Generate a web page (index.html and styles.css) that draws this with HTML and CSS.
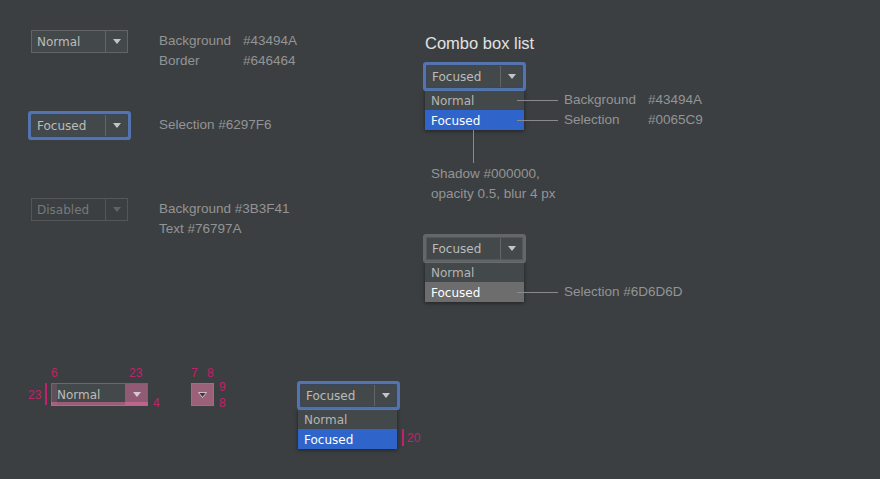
FILE: index.html
```html
<!DOCTYPE html>
<html>
<head>
<meta charset="utf-8">
<link rel="stylesheet" href="styles.css">
</head>
<body>
<div class="page">
  <div class="left">
    <div class="spec-row">
      <div class="combo"><span class="combo-value">Normal</span><span class="combo-btn"><svg class="arrow" width="8" height="5" viewBox="0 0 8 5"><path d="M0 0H8L4 5Z" fill="currentColor"/></svg></span></div>
      <div class="spec-text spec-grid"><span>Background</span><span>#43494A</span><span>Border</span><span>#646464</span></div>
    </div>
    <div class="spec-row">
      <div class="combo focus"><span class="combo-value">Focused</span><span class="combo-btn"><svg class="arrow" width="8" height="5" viewBox="0 0 8 5"><path d="M0 0H8L4 5Z" fill="currentColor"/></svg></span></div>
      <div class="spec-text">Selection #6297F6</div>
    </div>
    <div class="spec-row">
      <div class="combo disabled"><span class="combo-value">Disabled</span><span class="combo-btn"><svg class="arrow" width="8" height="5" viewBox="0 0 8 5"><path d="M0 0H8L4 5Z" fill="currentColor"/></svg></span></div>
      <div class="spec-text">Background #3B3F41<br>Text #76797A</div>
    </div>
  </div>

  <div class="right">
    <div class="title">Combo box list</div>
    <div class="combo focus first"><span class="combo-value">Focused</span><span class="combo-btn"><svg class="arrow" width="8" height="5" viewBox="0 0 8 5"><path d="M0 0H8L4 5Z" fill="currentColor"/></svg></span></div>
    <div class="list">
      <div class="list-row">Normal
        <div class="callout"><span class="callout-line"></span><span class="callout-grid"><span>Background</span><span>#43494A</span></span></div>
      </div>
      <div class="list-row sel">Focused
        <div class="callout"><span class="callout-line"></span><span class="callout-grid"><span>Selection</span><span>#0065C9</span></span></div>
      </div>
    </div>
    <div class="vline"></div>
    <div class="shadow-note">Shadow #000000,<br>opacity 0.5, blur 4 px</div>
    <div class="combo focus-gray second"><span class="combo-value">Focused</span><span class="combo-btn"><svg class="arrow" width="8" height="5" viewBox="0 0 8 5"><path d="M0 0H8L4 5Z" fill="currentColor"/></svg></span></div>
    <div class="list">
      <div class="list-row">Normal</div>
      <div class="list-row sel-gray">Focused
        <div class="callout"><span class="callout-line"></span><span>Selection #6D6D6D</span></div>
      </div>
    </div>
  </div>

  <div class="bottom">
    <div class="measure">
      <span class="dim d-6">6</span>
      <span class="dim d-23t">23</span>
      <span class="dim d-23l">23</span>
      <span class="dim-bar bar-l"></span>
      <span class="dim d-4">4</span>
      <div class="combo measured"><span class="combo-value">Normal</span><span class="combo-btn"><svg class="arrow" width="8" height="5" viewBox="0 0 8 5"><path d="M0 0H8L4 5Z" fill="currentColor"/></svg></span><span class="ov-bottom"></span><span class="ov-left"></span></div>
    </div>
    <div class="measure mini-wrap">
      <span class="dim m-7">7</span>
      <span class="dim m-8">8</span>
      <span class="dim m-9">9</span>
      <span class="dim m-8b">8</span>
      <div class="mini"><svg width="9" height="6" viewBox="0 0 9 6"><path d="M0.5 0.5H8.5L4.5 5.5Z" fill="#3a3a3c" stroke="#e9dde2" stroke-width="0.8"/></svg></div>
    </div>
    <div class="demo">
      <div class="combo focus"><span class="combo-value">Focused</span><span class="combo-btn"><svg class="arrow" width="8" height="5" viewBox="0 0 8 5"><path d="M0 0H8L4 5Z" fill="currentColor"/></svg></span></div>
      <div class="list">
        <div class="list-row">Normal</div>
        <div class="list-row sel">Focused
          <span class="dim-bar bar-20"></span>
          <span class="dim d-20">20</span>
        </div>
      </div>
    </div>
  </div>
</div>
</body>
</html>
```

FILE: styles.css
```css
* { box-sizing: border-box; }

body {
  margin: 0;
  width: 880px;
  height: 479px;
  overflow: hidden;
  background: #3c3f41;
  font-family: "Liberation Sans", Arial, sans-serif;
}

.page {
  display: grid;
  grid-template-columns: 394px 455px;
  grid-template-rows: 353px auto;
  padding: 30px 0 0 31px;
  height: 479px;
}

/* left column */
.left {
  display: flex;
  flex-direction: column;
}

.spec-row {
  display: flex;
  align-items: flex-start;
  gap: 31px;
  height: 84px;
}

.spec-text {
  margin-top: 1px;
  font-size: 13.5px;
  line-height: 20px;
  color: #939495;
}

.spec-grid {
  display: grid;
  grid-template-columns: 84px auto;
}

/* combo box */
.combo {
  position: relative;
  display: flex;
  flex-shrink: 0;
  width: 97px;
  height: 23px;
  border: 1px solid #646464;
  background: #43494a;
  color: #bbbbbb;
  font-family: "DejaVu Sans", sans-serif;
  font-size: 12px;
  line-height: 21px;
}

.combo-value {
  flex: 1;
  padding-left: 5px;
  line-height: 23px;
  white-space: nowrap;
}

.combo-btn {
  width: 22px;
  border-left: 1px solid #646464;
  display: flex;
  align-items: center;
  justify-content: center;
  color: #c4c4c4;
}

.arrow { display: block; }

.combo.focus {
  border-color: #3a4659;
  border-radius: 1px;
  box-shadow: 0 0 0 3px rgba(98, 151, 246, 0.6);
}

.combo.focus-gray {
  border-color: #55585a;
  border-radius: 1px;
  box-shadow: 0 0 0 3px rgba(150, 150, 150, 0.45);
}

.combo.disabled {
  background: #3b3f41;
  color: #76797a;
  border-color: #54575a;
}

.combo.disabled .combo-btn {
  border-color: #54575a;
  color: #5f6264;
}

/* right column */
.right {
  display: flex;
  flex-direction: column;
  align-items: flex-start;
  padding-top: 3px;
}

.title {
  font-size: 16.5px;
  line-height: 20px;
  color: #e2e2e2;
}

.right .combo { margin-left: 1px; }
.right .combo.first { margin-top: 12px; }
.right .combo.second { margin-top: 33px; }

.list {
  width: 99px;
  margin-top: 2px;
  background: #43494a;
  box-shadow: 0 1px 4px rgba(0, 0, 0, 0.5);
  font-family: "DejaVu Sans", sans-serif;
  font-size: 12px;
}

.list-row {
  position: relative;
  height: 20px;
  line-height: 22px;
  padding-left: 6px;
  color: #b4b4b4;
}

.list-row.sel {
  background: #2f65ca;
  color: #ffffff;
}

.list-row.sel-gray {
  background: #6d6d6d;
  color: #ffffff;
}

.callout {
  position: absolute;
  left: 92px;
  top: 0;
  height: 20px;
  display: flex;
  align-items: center;
  gap: 6px;
  font-family: "Liberation Sans", Arial, sans-serif;
  font-size: 13.5px;
  line-height: 20px;
  color: #939495;
  white-space: nowrap;
}

.callout-line {
  width: 41px;
  height: 1px;
  background: #8a8a8a;
}

.callout-grid {
  display: grid;
  grid-template-columns: 84px auto;
}

.vline {
  width: 1px;
  height: 33px;
  margin-left: 48px;
  background: #8a8a8a;
}

.shadow-note {
  margin-top: 1px;
  margin-left: 6px;
  font-size: 13.5px;
  line-height: 20px;
  color: #939495;
}

/* bottom measurement row */
.bottom {
  grid-column: 1 / -1;
  display: flex;
  align-items: flex-start;
}

.measure {
  position: relative;
  margin-left: 20px;
}

.mini-wrap { margin-left: 43px; }

.dim {
  position: absolute;
  font-size: 12px;
  line-height: 14px;
  color: #c1226b;
  white-space: nowrap;
}

.dim-bar {
  position: absolute;
  width: 2px;
  background: #c1226b;
}

.d-6 { left: 0; top: -17px; }
.d-23t { left: 78px; top: -17px; }
.d-23l { left: -23px; top: 5px; }
.bar-l { left: -6px; top: 0; height: 22px; }
.d-4 { left: 102px; top: 13px; }

.combo.measured {
  border-color: #76636d;
}

.combo.measured .combo-btn {
  background: rgba(225, 110, 160, 0.5);
  border-left-color: #7a6570;
  color: #d8c8cf;
}

.ov-bottom {
  position: absolute;
  left: -1px;
  right: -1px;
  bottom: -1px;
  height: 4px;
  background: rgba(225, 110, 160, 0.55);
}

.ov-left {
  position: absolute;
  left: 0;
  top: 0;
  bottom: 0;
  width: 5px;
  background: rgba(225, 110, 160, 0.18);
}

.mini {
  width: 23px;
  height: 23px;
  background: #9a6178;
  border: 1px solid #a46c82;
  display: flex;
  align-items: center;
  justify-content: center;
}

.m-7 { left: 0; top: -17px; }
.m-8 { left: 16px; top: -17px; }
.m-9 { left: 28px; top: -3px; }
.m-8b { left: 28px; top: 13px; }

.demo {
  margin-left: 86px;
  margin-top: 1px;
}

.demo .list { margin-left: -2px; }

.bar-20 { left: 104px; top: 0; height: 17px; }
.d-20 { left: 109px; top: 2px; font-family: "Liberation Sans", Arial, sans-serif; line-height: 14px; }
```
